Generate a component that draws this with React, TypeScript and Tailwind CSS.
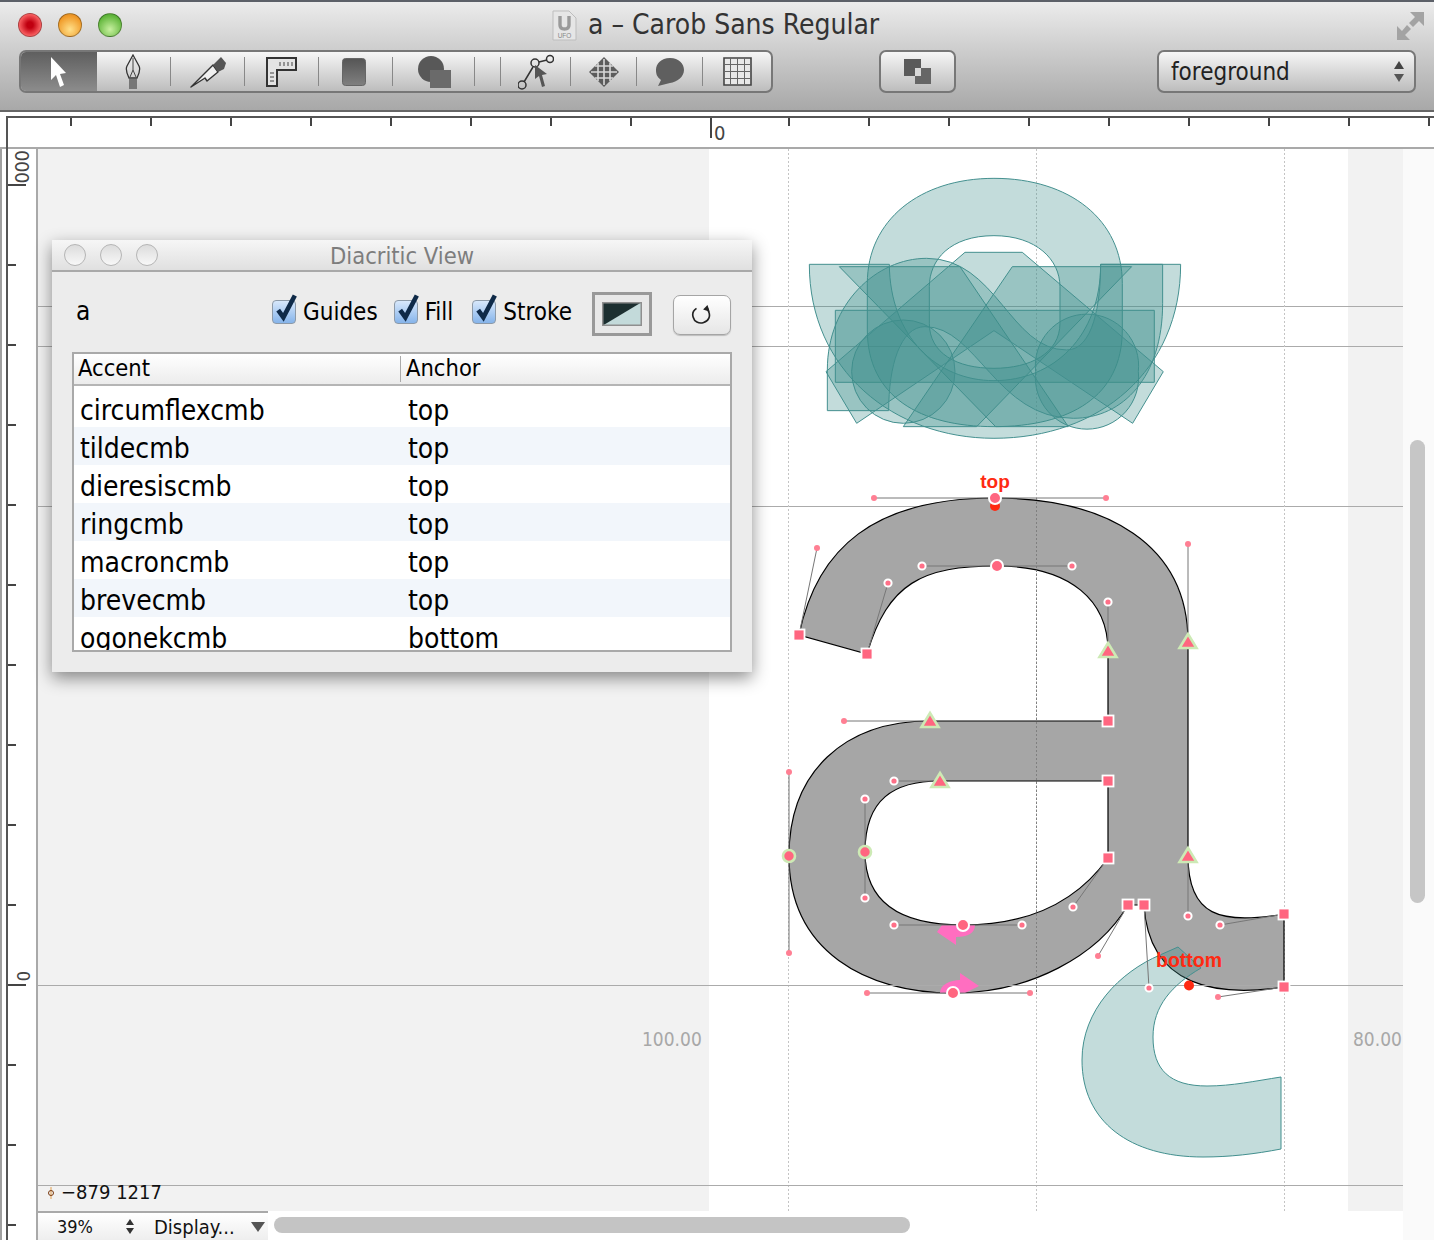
import React from "react";

const UI_FONT = "font-['DejaVu_Sans','Liberation_Sans',sans-serif] font-stretch-condensed";

const PINK = "#ff6680";
const TEAL_FILL = "rgba(61,141,140,0.31)";
const TEAL_STROKE = "#43908f";

const topTicks = [71, 151, 231, 311, 391, 471, 551, 631, 711, 789, 869, 949, 1029, 1109, 1189, 1269, 1349, 1429];
const sideTicks = [185, 265, 345, 425, 505, 585, 665, 745, 825, 905, 985, 1065, 1145, 1225];

const rows = [
  ["circumflexcmb", "top"],
  ["tildecmb", "top"],
  ["dieresiscmb", "top"],
  ["ringcmb", "top"],
  ["macroncmb", "top"],
  ["brevecmb", "top"],
  ["ogonekcmb", "bottom"],
];

// widths of the segmented tool buttons
const tools: { w: number; icon?: React.ReactNode; selected?: boolean }[] = [
  { w: 76, selected: true, icon: <ArrowIcon /> },
  { w: 74, icon: <PenIcon /> },
  { w: 74, icon: <KnifeIcon /> },
  { w: 74, icon: <RulerIcon /> },
  { w: 74, icon: <RectIcon /> },
  { w: 82, icon: <ShapesIcon /> },
  { w: 26 },
  { w: 70, icon: <NodeIcon /> },
  { w: 66, icon: <DiamondIcon /> },
  { w: 66, icon: <BubbleIcon /> },
  { w: 68, icon: <GridIcon /> },
];

function ArrowIcon() {
  return (
    <svg width="20" height="34" viewBox="0 0 20 34" className="mr-[2px]">
      <path d="M3 2 L3 25 L8 20 L12 32 L16 30 L12 19 L18 18 Z" fill="#fff" />
    </svg>
  );
}

function PenIcon() {
  return (
    <svg width="20" height="36" viewBox="0 0 20 36" className="mr-[2px]">
      <path d="M10 1 L16 12 Q18 16 14 24 L6 24 Q2 16 4 12 Z" fill="none" stroke="#333" strokeWidth="1.3" />
      <path d="M10 4 V16 M10 16 L7 23 M10 16 L13 23" fill="none" stroke="#444" strokeWidth="1" />
      <rect x="6" y="25" width="8" height="10" fill="#777" />
    </svg>
  );
}

function KnifeIcon() {
  return (
    <svg width="36" height="32" viewBox="0 0 36 32">
      <path d="M1 31 L23 9 L28 16 L17 25 L15 22 Z" fill="#f0f0f0" stroke="#333" strokeWidth="1.4" strokeLinejoin="round" />
      <path d="M23 9 L31 1 L36 7 L34 13 L28 16 Z" fill="#555" />
    </svg>
  );
}

function RulerIcon() {
  return (
    <svg width="31" height="30" viewBox="0 0 31 30" className="mr-[2px]">
      <path d="M1 1 H30 V13 H11 V29 H1 Z" fill="#e4e4e4" stroke="#333" strokeWidth="2" />
      <path d="M14 5 V9 M18 5 V9 M22 5 V9 M26 5 V9 M4 16 H8 M4 20 H8 M4 24 H8" stroke="#444" strokeWidth="1" />
    </svg>
  );
}

function RectIcon() {
  return (
    <svg width="24" height="28" viewBox="0 0 24 28" className="mr-[4px]">
      <defs>
        <linearGradient id="rectFill" x1="0" y1="0" x2="0" y2="1">
          <stop offset="0" stopColor="#555" />
          <stop offset="1" stopColor="#808080" />
        </linearGradient>
      </defs>
      <rect x="0.5" y="0.5" width="23" height="27" rx="3" fill="url(#rectFill)" stroke="#666" />
    </svg>
  );
}

function ShapesIcon() {
  return (
    <svg width="33" height="32" viewBox="0 0 33 32">
      <circle cx="13" cy="13" r="13" fill="#585858" />
      <rect x="12" y="14" width="21" height="18" fill="#6a6a6a" />
    </svg>
  );
}

function NodeIcon() {
  return (
    <svg width="36" height="36" viewBox="0 0 36 36">
      <g fill="none" stroke="#333" strokeWidth="1.5">
        <circle cx="17" cy="9" r="4" />
        <circle cx="32" cy="5" r="3.5" />
        <circle cx="4" cy="31" r="4" />
        <path d="M21 8 L29 6 M15 13 L6 28" />
      </g>
      <path d="M17 11 L17 25 L21 22 L24 33 L27 32 L24 21 L29 20 Z" fill="#555" />
    </svg>
  );
}

function DiamondIcon() {
  return (
    <svg width="30" height="30" viewBox="0 0 30 30">
      <path d="M15 0 L30 15 L15 30 L0 15 Z" fill="#5c5c5c" />
      <path d="M9 6 V24 M15 2 V28 M21 6 V24 M6 9 H24 M2 15 H28 M6 21 H24" stroke="#d8d8d8" strokeWidth="1.6" />
    </svg>
  );
}

function BubbleIcon() {
  return (
    <svg width="30" height="30" viewBox="0 0 30 30">
      <path d="M15 1 C24 1 29 7 29 13 C29 20 22 25 15 26 L3 29 L6 23 C2 20 1 17 1 13 C1 7 6 1 15 1 Z" fill="#5f5f5f" />
    </svg>
  );
}

function GridIcon() {
  return (
    <svg width="29" height="29" viewBox="0 0 29 29">
      <path d="M1 1 H28 V28 H1 Z" fill="#e8e8e8" stroke="#444" strokeWidth="1.6" />
      <path d="M7.5 1 V28 M14.5 1 V28 M21.5 1 V28 M1 7.5 H28 M1 14.5 H28 M1 21.5 H28" stroke="#666" strokeWidth="1" />
    </svg>
  );
}

function LayersIcon() {
  return (
    <svg width="28" height="26" viewBox="0 0 28 26">
      <rect x="0" y="0" width="17" height="17" fill="#5a5a5a" />
      <rect x="11" y="9" width="16" height="16" fill="#666" />
      <rect x="11" y="9" width="6" height="8" fill="#d8d8d8" />
    </svg>
  );
}

function UfoDocIcon() {
  return (
    <svg width="25" height="31" viewBox="0 0 25 31">
      <path d="M1 1 H17 L24 8 V30 H1 Z" fill="#e6e6e6" stroke="#bdbdbd" />
      <path d="M8 6 V15 Q8 19 12.5 19 Q17 19 17 15 V6" fill="none" stroke="#9a9a9a" strokeWidth="3.4" />
      <text x="12.5" y="28" fontSize="6.5" textAnchor="middle" fill="#888" fontFamily="Liberation Sans">UFO</text>
    </svg>
  );
}

function FullscreenIcon() {
  return (
    <svg width="28" height="30" viewBox="0 0 28 30">
      <path d="M28 1 V15 L23 10 L17 16 L13 12 L19 6 L14 1 Z" fill="#a3a3a3" />
      <path d="M1 29 V15 L6 20 L11 14 L15 18 L9 24 L14 29 Z" fill="#a3a3a3" />
    </svg>
  );
}

function RefreshIcon() {
  return (
    <svg width="22" height="22" viewBox="0 0 20 20">
      <path d="M5 4 C2 6 1 9 2 12 C3 16 7 18 11 17 C16 16 18 11 16 7 L15 4" fill="none" stroke="#222" strokeWidth="1.5" />
      <path d="M11 5 L15 1 L17 7 Z" fill="#222" />
    </svg>
  );
}

function Check({ label, className = "" }: { label: string; className?: string }) {
  return (
    <div className={`flex items-center gap-[7px] ${className}`}>
      <div className="relative w-[24px] h-[24px] rounded-[4px] border border-[#8d9aa8] bg-gradient-to-b from-[#d8e8fb] to-[#86b4ea]">
        <svg className="absolute left-[1px] top-[-8px]" width="25" height="30" viewBox="0 0 24 28">
          <path d="M4 16 L9 23 L20 2" fill="none" stroke="#0f2a48" strokeWidth="4.4" />
        </svg>
      </div>
      <span className="text-[24px] leading-none text-black">{label}</span>
    </div>
  );
}

function Light({ className }: { className: string }) {
  return <div className={`w-[24px] h-[24px] rounded-full border border-black/30 ${className}`} />;
}

function Toolbar() {
  return (
    <div className="flex items-center ml-[19px] mt-[-1px]">
      <div className="flex h-[43px] rounded-[7px] border-2 border-[#777] bg-gradient-to-b from-[#f6f6f6] to-[#bdbdbd] overflow-hidden">
        {tools.map((t, i) => (
          <div
            key={i}
            style={{ width: t.w }}
            className={`relative flex items-center justify-center shrink-0 ${
              t.selected ? "bg-gradient-to-b from-[#5f5f5f] to-[#8c8c8c]" : ""
            } ${i > 0 && i < tools.length - 1 ? "after:absolute after:right-0 after:top-[5px] after:bottom-[5px] after:w-[1px] after:bg-[#888]" : ""}`}
          >
            {t.icon}
          </div>
        ))}
      </div>
      <div className="ml-[106px] w-[77px] h-[43px] rounded-[7px] border-2 border-[#777] bg-gradient-to-b from-[#f6f6f6] to-[#bdbdbd] flex items-center justify-center">
        <LayersIcon />
      </div>
      <div className="ml-[201px] w-[259px] h-[43px] rounded-[7px] border-2 border-[#777] bg-gradient-to-b from-[#f6f6f6] to-[#bdbdbd] flex items-center justify-between pl-[12px] pr-[10px]">
        <span className="text-[24px] text-[#222] leading-none">foreground</span>
        <div className="flex flex-col gap-[5px]">
          <div className="w-0 h-0 border-x-[5px] border-x-transparent border-b-[8px] border-b-[#444]" />
          <div className="w-0 h-0 border-x-[5px] border-x-transparent border-t-[8px] border-t-[#555]" />
        </div>
      </div>
    </div>
  );
}

function Header() {
  return (
    <header className="relative h-[112px] shrink-0 flex flex-col border-t-2 border-b-2 border-t-[#5c6068] border-b-[#666] bg-gradient-to-b from-[#ececec] to-[#a8a8a8]">
      <div className="h-[49px] pb-[4px] relative flex items-center">
        <div className="flex gap-[16px] ml-[18px]">
          <Light className="bg-[radial-gradient(circle_at_50%_50%,#c00010_20%,#ff6a6a_75%,#ffc8c8)]" />
          <Light className="bg-[radial-gradient(circle_at_50%_70%,#ffe08a,#f09a28_70%,#c87a20)]" />
          <Light className="bg-[radial-gradient(circle_at_50%_70%,#c8f0a0,#64b83e_70%,#3f8f2a)]" />
        </div>
        <div className="ml-[430px] mt-[1px]">
          <UfoDocIcon />
        </div>
        <span className="ml-[11px] text-[28px] leading-none text-[#333]">a – Carob Sans Regular</span>
        <div className="absolute right-[10px] top-[9px]">
          <FullscreenIcon />
        </div>
      </div>
      <Toolbar />
    </header>
  );
}

function TopRuler() {
  return (
    <div className="relative h-[37px] shrink-0 border-b-2 border-b-[#a9a9a9] bg-white pt-[4px] pl-[6px]">
      <div className="h-[2px] bg-[#555]" />
      {/* ticks */}
      <div className="flex items-start h-[8px]">
        <div className="w-[64px] shrink-0" />
        {topTicks.map((x, i) => (
          <div
            key={x}
            style={{ width: i < topTicks.length - 1 ? topTicks[i + 1] - x : 5 }}
            className={`shrink-0 border-l-2 border-l-[#444] ${x === 711 ? "h-[20px]" : "h-[8px]"}`}
          />
        ))}
      </div>
      <span className="absolute left-[714px] top-[11px] text-[20px] leading-none text-[#444]">0</span>
    </div>
  );
}

function SideRuler() {
  return (
    <div className="relative w-[38px] shrink-0 bg-white border-r-2 border-r-[#a9a9a9]">
      <div className="absolute left-0 top-0 bottom-0 w-[2px] bg-[#a0a0a0]" />
      <div className="absolute left-[6px] top-[-32px] bottom-0 w-[2px] bg-[#555]" />
      <div className="flex flex-col pl-[8px] pt-[35px]">
        {sideTicks.map((y, i) => (
          <div
            key={y}
            style={{ height: i < sideTicks.length - 1 ? sideTicks[i + 1] - y : 15 }}
            className={`shrink-0 border-t-2 border-t-[#444] ${y === 185 || y === 985 ? "w-[18px]" : "w-[8px]"}`}
          />
        ))}
      </div>
      <span className="absolute left-[12px] top-[8px] w-[20px] h-[20px] flex items-center justify-center -rotate-90 text-[20px] leading-none text-[#444] tracking-tight">000</span>
      <span className="absolute left-[14px] top-[817px] w-[20px] h-[20px] flex items-center justify-center -rotate-90 text-[18px] leading-none text-[#444]">0</span>
    </div>
  );
}

function Panel() {
  return (
    <div className="absolute left-[14px] top-[91px] w-[700px] h-[432px] flex flex-col bg-[#ececec] shadow-[0_6px_16px_rgba(0,0,0,0.45)]">
      <div className="relative h-[32px] shrink-0 flex items-center border-b-2 border-b-[#a9a9a9] bg-gradient-to-b from-[#f6f6f6] to-[#e0e0e0]">
        <div className="flex gap-[14px] ml-[12px]">
          {[0, 1, 2].map((i) => (
            <div key={i} className="w-[22px] h-[22px] rounded-full border border-[#b5b5b5] bg-gradient-to-b from-[#dcdcdc] to-[#f8f8f8]" />
          ))}
        </div>
        <span className="absolute inset-x-0 mt-[3px] text-center text-[23.5px] leading-none text-[#7d7d7d]">Diacritic View</span>
      </div>
      <div className="flex items-center h-[80px] pl-[24px] pr-[21px]">
        <span className="mb-[2px] text-[26px] leading-none text-black">a</span>
        <div className="ml-auto mb-[1px] flex items-center gap-[16px] mr-[20px]">
          <Check label="Guides" />
          <Check label="Fill" className="mr-[3px]" />
          <Check label="Stroke" />
        </div>
        <div className="mt-[4px] w-[60px] h-[44px] border-[3px] border-[#999] bg-[#e8e8e8] flex items-center justify-center">
          <svg width="40" height="24" viewBox="0 0 40 24">
            <rect width="40" height="24" fill="#1c2f30" />
            <path d="M40 0 V24 H0 Z" fill="#c3dada" />
            <rect x="0.75" y="0.75" width="38.5" height="22.5" fill="none" stroke="#8f8f8f" strokeWidth="1.5" />
          </svg>
        </div>
        <div className="mt-[6px] ml-[21px] w-[58px] h-[40px] rounded-[7px] border border-[#a5a5a5] bg-gradient-to-b from-white to-[#e6e6e6] flex items-center justify-center shadow-[0_1px_1px_rgba(0,0,0,0.2)]">
          <RefreshIcon />
        </div>
      </div>
      <div className="mx-[20px] h-[300px] border-2 border-[#a9a9a9] bg-white overflow-hidden">
        <div className="flex h-[32px] border-b-2 border-b-[#b5b5b5] bg-gradient-to-b from-white to-[#ececec] text-[23.5px] leading-none text-black">
          <div className="w-[327px] pl-[4px] flex items-center border-r border-r-[#aaa] my-[2px]">Accent</div>
          <div className="pl-[5px] flex items-center">Anchor</div>
        </div>
        <div className="pt-[3px]">
          {rows.map(([accent, anchor], i) => (
            <div key={accent} className={`flex h-[38px] items-center pt-[6px] text-[28px] leading-none text-black ${i % 2 === 1 ? "bg-[#f2f6fb]" : ""}`}>
              <div className="w-[328px] pl-[6px]">{accent}</div>
              <div className="pl-[6px]">{anchor}</div>
            </div>
          ))}
        </div>
      </div>
    </div>
  );
}

const handleLines = [
  [874, 498, 1106, 498], [799, 635, 817, 548], [867, 654, 888, 583], [922, 566, 1072, 566],
  [1108, 651, 1108, 602], [1188, 642, 1188, 544], [930, 721, 844, 721], [789, 856, 789, 772],
  [789, 856, 789, 953], [867, 993, 1030, 993], [1128, 905, 1098, 956], [1144, 905, 1149, 988],
  [1284, 987, 1218, 997], [1284, 914, 1220, 925], [1188, 856, 1188, 916], [1108, 858, 1073, 907],
  [894, 925, 1022, 925], [865, 852, 865, 898], [865, 852, 865, 799], [940, 781, 894, 781],
];

const handleDots = [
  [874, 498], [1106, 498], [817, 548], [1188, 544], [844, 721], [789, 772], [789, 953],
  [867, 993], [1030, 993], [1098, 956], [1218, 997],
];
const handleRings = [
  [922, 566], [1072, 566], [888, 583], [1108, 602], [894, 781], [865, 799], [865, 898],
  [894, 925], [1022, 925], [1073, 907], [1188, 916], [1220, 925], [1149, 988],
];
const corners = [
  [799, 635], [867, 654], [1108, 721], [1108, 781], [1108, 858], [1128, 905], [1144, 905], [1284, 914], [1284, 987],
];
const smooths = [
  [1108, 651], [1188, 642], [930, 721], [940, 781], [1188, 856],
];
const curves = [
  [995, 498], [997, 566], [963, 925], [953, 993],
];

const accentPaths = [
  // ring
  "M612 25 C840 25 997 150 997 340 V480 C997 680 840 770 612 770 C390 770 232 680 232 480 V340 C232 150 390 25 612 25 Z M612 197 C480 197 418 270 418 350 V460 C418 550 500 595 612 595 C720 595 810 550 810 460 V350 C810 270 740 197 612 197 Z",
  // grave
  "M148 290 H510 L835 770 H617 Z",
  // acute
  "M1025 290 H667 L340 770 H560 Z",
  // breve
  "M58 283 H298 C300 500 440 632 612 632 C790 632 932 500 932 283 H1172 C1172 600 930 805 612 805 C310 805 58 600 58 283 Z",
  // macron
  "M136 421 H1093 V637 H136 Z",
  // dieresis
  "M185 605 A155 155 0 1 1 495 605 A155 155 0 1 1 185 605 Z M737 605 A155 155 0 1 1 1045 605 A155 155 0 1 1 737 605 Z",
  // tilde
  "M112 722 V600 C112 400 260 265 410 265 C620 265 660 540 830 540 C910 540 932 400 932 283 H1118 V400 C1118 620 1000 745 850 745 C620 745 560 470 405 470 C330 470 296 590 296 722 Z",
  // circumflex
  "M525 247 H697 L1120 605 L1028 760 L612 482 L200 760 L108 605 Z",
];

function GlyphCanvas() {
  return (
    <svg className="absolute inset-0" width="1365" height="1062" viewBox="38 149 1365 1062">
      {/* guides */}
      {[306.5, 346.5, 506.5, 985.5].map((y) => (
        <line key={y} x1="38" x2="1403" y1={y} y2={y} stroke="#ababab" />
      ))}
      {[788.5, 1036.5, 1284.5].map((x) => (
        <line key={x} x1={x} x2={x} y1="149" y2="1211" stroke="#c4c4c4" strokeDasharray="2 2" />
      ))}

      {/* accents overlaid on the a */}
      <g transform="translate(790 170) scale(0.3333)">
        {accentPaths.map((d, i) => (
          <path key={i} d={d} fill={TEAL_FILL} fillRule="evenodd" stroke={TEAL_STROKE} strokeWidth="3" />
        ))}
      </g>

      {/* glyph outline */}
      <path
        fillRule="evenodd"
        fill="#a6a6a6"
        stroke="#000"
        strokeWidth="1.2"
        d="M799 635 C817 548 874 498 995 498 C1106 498 1188 544 1188 642 L1188 856 C1188 916 1220 925 1284 914 L1284 987 C1218 997 1149 988 1144 905 L1128 905 C1098 956 1030 993 953 993 C867 993 789 952 789 856 C789 772 844 721 930 721 L1108 721 L1108 651 C1108 602 1072 566 997 566 C922 566 888 583 867 654 Z M940 781 L1108 781 L1108 858 C1073 907 1022 925 963 925 C894 925 865 898 865 852 C865 799 894 781 940 781 Z"
      />

      <line x1="38" x2="1403" y1="985.5" y2="985.5" stroke="#ababab" />
      <line x1="1036.5" x2="1036.5" y1="498" y2="993" stroke="#808080" strokeDasharray="2 2" />

      {/* ogonek */}
      <path
        d="M1178 947 L1201 968 C1172 985 1153 1006 1153 1037 C1153 1070 1170 1086 1207 1086 C1232 1086 1255 1081 1281 1077 L1281 1149 C1255 1154 1230 1157 1203 1157 C1130 1157 1082 1122 1082 1060 C1082 1010 1120 972 1160 955 Z"
        fill={TEAL_FILL}
        stroke={TEAL_STROKE}
      />

      {/* start point arrows */}
      <path d="M940 993 C940 985 950 980 960 980 V973 L979 986 L965 993 Z" fill="#ff6ec0" />
      <path d="M937 932 L956 945 V937 C968 937 975 933 975 925 H942 Z" fill="#ff6ec0" />

      {/* handles */}
      {handleLines.map(([x1, y1, x2, y2], i) => (
        <line key={i} x1={x1} y1={y1} x2={x2} y2={y2} stroke="#777" />
      ))}
      {handleDots.map(([x, y], i) => (
        <circle key={i} cx={x} cy={y} r="3" fill="#ff7f93" />
      ))}
      {handleRings.map(([x, y], i) => (
        <circle key={i} cx={x} cy={y} r="3.6" fill="#ff7088" stroke="#fff" strokeWidth="2" />
      ))}

      {/* anchors */}
      <circle cx="995" cy="506" r="5" fill="#ff2a12" />
      <circle cx="1189" cy="985.5" r="5" fill="#ff2a12" />

      {/* on curve points */}
      {curves.map(([x, y], i) => (
        <circle key={i} cx={x} cy={y} r="6" fill={PINK} stroke="#fff" strokeWidth="2" />
      ))}
      {[[789, 856], [865, 852]].map(([x, y], i) => (
        <circle key={i} cx={x} cy={y} r="6" fill={PINK} stroke="#cdeab5" strokeWidth="2.6" />
      ))}
      {corners.map(([x, y], i) => (
        <rect key={i} x={x - 5.5} y={y - 5.5} width="11" height="11" fill={PINK} stroke="#fff" strokeWidth="1.8" />
      ))}
      {smooths.map(([x, y], i) => (
        <path key={i} d={`M${x} ${y - 8} L${x + 8.5} ${y + 6} H${x - 8.5} Z`} fill={PINK} stroke="#cdeab5" strokeWidth="2.6" />
      ))}

      <text x="995" y="488" textAnchor="middle" fontFamily="Liberation Sans" fontWeight="700" fontSize="19" fill="#ff2a12">top</text>
      <text x="1189" y="967" textAnchor="middle" fontFamily="Liberation Sans" fontWeight="700" fontSize="19.5" fill="#ff2a12">bottom</text>
      <text x="642" y="1046" fontSize="19" fontFamily="DejaVu Sans" fontStretch="condensed" fill="#a8a8a8">100.00</text>
      <text x="1353" y="1046" fontSize="19" fontFamily="DejaVu Sans" fontStretch="condensed" fill="#a8a8a8">80.00</text>
    </svg>
  );
}

export default function App() {
  return (
    <div className={`w-[1434px] h-[1240px] overflow-hidden flex flex-col bg-white ${UI_FONT}`}>
      <Header />
      <TopRuler />
      <div className="flex-1 flex min-h-0">
        <SideRuler />
        <div className="flex-1 flex flex-col min-w-0">
          <div className="relative flex-1 flex min-h-0 bg-[#f2f2f2]">
            <div className="w-[671px] shrink-0" />
            <div className="w-[639px] shrink-0 bg-white" />
            <GlyphCanvas />
            <div className="absolute left-0 right-0 bottom-0 h-[26px] border-t border-t-[#ababab] flex items-start pl-[8px] gap-[5px]">
              <svg className="mt-[1px]" width="10" height="12" viewBox="0 0 10 12">
                <path d="M5 0 V12" stroke="#e2a050" />
                <circle cx="5" cy="6" r="2.5" fill="none" stroke="#7a3a10" />
              </svg>
              <span className="mt-[-4px] text-[20px] leading-none text-[#111]">−879 1217</span>
            </div>
            <Panel />
          </div>
          <div className="h-[29px] shrink-0 flex bg-white">
            <div className="w-[230px] h-full flex items-center border-t-2 border-t-[#a9a9a9] bg-gradient-to-b from-white to-[#eeeeee] leading-none text-[#111]">
              <span className="ml-[19px] text-[18px]">39%</span>
              <div className="ml-[33px] flex flex-col gap-[3px]">
                <div className="w-0 h-0 border-x-[4px] border-x-transparent border-b-[6px] border-b-[#333]" />
                <div className="w-0 h-0 border-x-[4px] border-x-transparent border-t-[6px] border-t-[#333]" />
              </div>
              <span className="ml-[20px] text-[20px]">Display...</span>
              <div className="ml-[16px] w-0 h-0 border-x-[7px] border-x-transparent border-t-[10px] border-t-[#555]" />
            </div>
            <div className="ml-[6px] mt-[6px] w-[636px] h-[16px] rounded-full bg-[#c4c4c4]" />
          </div>
        </div>
        <div className="w-[31px] shrink-0 bg-[#fafafa] pl-[7px] pt-[291px]">
          <div className="w-[15px] h-[463px] rounded-full bg-[#c6c6c6]" />
        </div>
      </div>
    </div>
  );
}
